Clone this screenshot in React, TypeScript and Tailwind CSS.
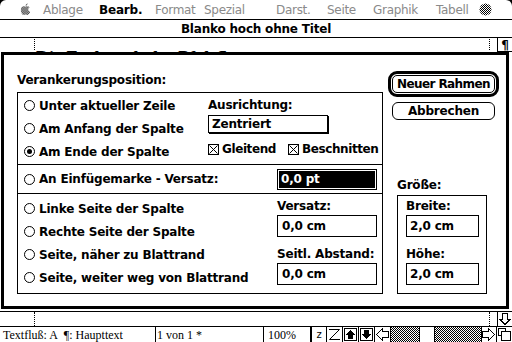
import React from "react";

const chicago = "font-['DejaVu_Sans',sans-serif] font-bold text-[12px] tracking-[-0.2px] leading-none";
const dim = "font-normal text-[#8a8a8a] tracking-[-0.3px]";

function Radio({ on }: { on?: boolean }) {
  return (
    <span className="w-[11px] h-[11px] rounded-full border border-black flex items-center justify-center shrink-0">
      {on && <span className="w-[5px] h-[5px] rounded-full bg-black" />}
    </span>
  );
}

function Check() {
  return (
    <svg width="11" height="11" viewBox="0 0 11 11" className="shrink-0">
      <rect x="0.5" y="0.5" width="10" height="10" fill="white" stroke="black" shapeRendering="crispEdges" />
      <path d="M1.5 1.5L9.5 9.5M9.5 1.5L1.5 9.5" stroke="black" strokeWidth="1" />
    </svg>
  );
}

function Opt({ label, on }: { label: string; on?: boolean }) {
  return (
    <div className="h-[23px] flex items-center gap-[4px] whitespace-nowrap">
      <Radio on={on} />
      <span>{label}</span>
    </div>
  );
}

function Checker({ id, w, h }: { id: string; w: number; h: number }) {
  return (
    <svg width={w} height={h} className="block">
      <defs>
        <pattern id={id} width="2" height="2" patternUnits="userSpaceOnUse">
          <rect x="0" y="0" width="1" height="1" fill="black" />
          <rect x="1" y="1" width="1" height="1" fill="black" />
        </pattern>
      </defs>
      <rect x="0" y="0" width={w} height={h} fill={`url(#${id})`} shapeRendering="crispEdges" />
    </svg>
  );
}

export default function App() {
  return (
    <div className="w-[512px] h-[342px] bg-black overflow-hidden flex flex-col text-black">
      {/* Menüleiste */}
      <div className={`h-[20px] shrink-0 bg-white rounded-t-[6px] border-b border-black flex items-center pl-[20px] whitespace-nowrap ${chicago}`}>
        <div className="w-[23px]">
          <svg width="11" height="13" viewBox="0 0 12 14">
            <defs>
              <pattern id="dA" width="2" height="2" patternUnits="userSpaceOnUse">
                <rect x="0" y="0" width="1" height="1" fill="black" />
                <rect x="1" y="1" width="1" height="1" fill="black" />
              </pattern>
            </defs>
            <path d="M8.5 0.5C8.2 2 7.2 3 6 3C6 1.8 7 0.8 8.5 0.5Z" fill="url(#dA)" />
            <path d="M6 4C4.5 3.2 1 3 1 7.5C1 10 2.5 13 4 13C5 13 5 12.5 6 12.5C7 12.5 7 13 8 13C9.5 13 11 10.5 11 9.5C9.5 9 9 8 9 7C9 6 9.5 5 10.5 4.5C9.5 3.5 7.5 3.2 6 4Z" fill="url(#dA)" />
          </svg>
        </div>
        <div className={`w-[56px] ${dim}`}>Ablage</div>
        <div className="w-[56px]">Bearb.</div>
        <div className={`w-[49px] ${dim}`}>Format</div>
        <div className={`w-[72px] ${dim}`}>Spezial</div>
        <div className={`w-[51px] ${dim}`}>Darst.</div>
        <div className={`w-[46px] ${dim}`}>Seite</div>
        <div className={`w-[63px] ${dim}`}>Graphik</div>
        <div className={`w-[43px] ${dim}`}>Tabell</div>
        <svg width="13" height="13" viewBox="0 0 13 13">
          <defs>
            <pattern id="dB" width="2" height="2" patternUnits="userSpaceOnUse">
              <rect x="0" y="0" width="1" height="1" fill="black" />
              <rect x="1" y="1" width="1" height="1" fill="black" />
            </pattern>
          </defs>
          <circle cx="6.5" cy="6.5" r="6" fill="url(#dB)" />
        </svg>
      </div>

      {/* Titelleiste */}
      <div className={`h-[18px] shrink-0 bg-white border-b border-black flex items-center justify-center ${chicago}`}>
        Blanko hoch ohne Titel
      </div>

      {/* Lineal / Text dahinter */}
      <div className="h-[14px] shrink-0 bg-white flex overflow-hidden">
        <div className="w-[34px] shrink-0" />
        <div className="h-[11px] mt-[1px] border-l border-dotted border-black" />
        <div className="w-[454px] shrink-0 overflow-hidden pl-[1px]">
          <div className="mt-[11px] font-['Liberation_Serif',serif] font-bold text-[18px] leading-[18px] whitespace-nowrap">
            Die Fachwerk der Pfalz¶
          </div>
        </div>
        <div className="h-[11px] mt-[1px] border-l border-dotted border-black" />
        <div className="w-[7px] shrink-0" />
        <div className="w-[15px] shrink-0 border-l border-b border-black flex items-center justify-center font-['DejaVu_Sans',sans-serif] font-bold text-[12px] leading-none">
          ¶
        </div>
      </div>

      {/* Dialog */}
      <div className="h-[257px] shrink-0 bg-white flex">
        <div className="w-[1px] shrink-0" />
        <div className={`w-[508px] h-full border-[3px] border-black flex ${chicago}`}>
          <div className="pl-[13px] pt-[17px] flex flex-col">
            <div className="h-[16px] flex items-center">Verankerungsposition:</div>
            <div className="mt-[4px] w-[366px] h-[202px] border border-black flex flex-col">
              {/* oberer Bereich */}
              <div className="h-[72px] border-b border-black flex">
                <div className="w-[190px] pl-[6px] pt-[1px]">
                  <Opt label="Unter aktueller Zeile" />
                  <Opt label="Am Anfang der Spalte" />
                  <Opt label="Am Ende der Spalte" on />
                </div>
                <div className="pt-[1px] flex flex-col">
                  <div className="h-[21px] flex items-center">Ausrichtung:</div>
                  <div className="w-[120px] h-[18px] border border-black shadow-[1px_1px_0_0_#000] flex items-center pl-[3px]">
                    Zentriert
                  </div>
                  <div className="mt-[5px] h-[22px] flex items-center gap-[3px] whitespace-nowrap tracking-[-0.4px]">
                    <Check />
                    <span className="w-[56px]">Gleitend</span>
                    <span className="w-[4px]" />
                    <Check />
                    <span>Beschnitten</span>
                  </div>
                </div>
              </div>
              {/* mittlerer Bereich */}
              <div className="h-[29px] border-b border-black flex items-center">
                <div className="w-[259px] pl-[6px] flex items-center gap-[4px] whitespace-nowrap">
                  <Radio />
                  <span>An Einfügemarke - Versatz:</span>
                </div>
                <div className="w-[100px] h-[21px] border border-black bg-white p-[1px]">
                  <div className="w-full h-full bg-black text-white flex items-center pl-[2px]">0,0 pt</div>
                </div>
              </div>
              {/* unterer Bereich */}
              <div className="flex-1 flex">
                <div className="w-[259px] pl-[6px] pt-[3px]">
                  <Opt label="Linke Seite der Spalte" />
                  <Opt label="Rechte Seite der Spalte" />
                  <Opt label="Seite, näher zu Blattrand" />
                  <Opt label="Seite, weiter weg von Blattrand" />
                </div>
                <div className="pt-[2px] flex flex-col">
                  <div className="h-[19px] flex items-center">Versatz:</div>
                  <div className="w-[100px] h-[22px] border border-black flex items-center pl-[4px]">0,0 cm</div>
                  <div className="mt-[7px] h-[19px] flex items-center">Seitl. Abstand:</div>
                  <div className="w-[100px] h-[22px] border border-black flex items-center pl-[4px]">0,0 cm</div>
                </div>
              </div>
            </div>
          </div>

          <div className="ml-[5px] pt-[16px] flex flex-col">
            <div className="w-[111px] h-[26px] border-[3px] border-black rounded-[9px] p-[1px]">
              <div className="w-full h-full border border-black rounded-[5px] flex items-center justify-center whitespace-nowrap tracking-[-0.6px]">
                Neuer Rahmen
              </div>
            </div>
            <div className="mt-[5px] ml-[4px] w-[103px] h-[18px] border border-black rounded-[6px] flex items-center justify-center">
              Abbrechen
            </div>
            <div className="mt-[57px] ml-[9px] h-[16px] flex items-center">Größe:</div>
            <div className="mt-[2px] ml-[9px] w-[90px] h-[99px] border border-black pl-[8px] flex flex-col">
              <div className="h-[19px] flex items-center">Breite:</div>
              <div className="w-[73px] h-[22px] border border-black flex items-center pl-[3px]">2,0 cm</div>
              <div className="mt-[7px] h-[19px] flex items-center">Höhe:</div>
              <div className="w-[73px] h-[22px] border border-black flex items-center pl-[3px]">2,0 cm</div>
            </div>
          </div>
        </div>
        <div className="flex-1" />
      </div>

      <div className="h-[2px] shrink-0 bg-white" />

      {/* untere Leiste */}
      <div className="h-[15px] shrink-0 bg-white border-t border-black flex">
        <div className="w-[34px] shrink-0" />
        <div className="h-full border-l border-dotted border-black" />
        <div className="w-[454px] shrink-0" />
        <div className="h-full border-l border-dotted border-black" />
        <div className="w-[7px] shrink-0" />
        <div className="w-[15px] shrink-0 border-l border-black flex items-center justify-center">
          <svg width="14" height="14" viewBox="0 0 14 14">
            <path d="M7 12.5L1.5 7H4.5V1.5H9.5V7H12.5Z" fill="white" stroke="black" shapeRendering="crispEdges" />
          </svg>
        </div>
      </div>

      {/* Statuszeile */}
      <div className="h-[16px] shrink-0 bg-white border-t border-black flex font-['Liberation_Serif',serif] text-[12px] leading-none">
        <div className="w-[156px] shrink-0 border-r border-black flex items-center pl-[3px] pt-[1px] whitespace-nowrap">
          Textfluß: A&nbsp;&nbsp;¶: Haupttext
        </div>
        <div className="w-[108px] shrink-0 border-r border-black flex items-center pl-[1px] pt-[1px] whitespace-nowrap">
          1 von 1 *
        </div>
        <div className="w-[48px] shrink-0 border-r-2 border-black flex items-center pl-[4px] pt-[1px]">100%</div>
        <div className="w-[15px] shrink-0 border-r border-black flex items-center justify-center font-['DejaVu_Sans',sans-serif] text-[10px]">
          z
        </div>
        <div className="w-[16px] shrink-0 border-r border-black flex items-center justify-center">
          <svg width="15" height="15" viewBox="0 0 15 15">
            <path d="M2 2.5H12.5L2.5 12.5H13" fill="none" stroke="black" />
          </svg>
        </div>
        <div className="w-[16px] shrink-0 border-r border-black flex items-center justify-center">
          <svg width="15" height="15" viewBox="0 0 15 15" shapeRendering="crispEdges">
            <rect x="1.5" y="1.5" width="12" height="12" fill="white" stroke="black" />
            <path d="M7.5 3L12 8H10V12H5V8H3Z" fill="black" />
          </svg>
        </div>
        <div className="w-[16px] shrink-0 border-r border-black flex items-center justify-center">
          <svg width="15" height="15" viewBox="0 0 15 15" shapeRendering="crispEdges">
            <rect x="1.5" y="1.5" width="12" height="12" fill="white" stroke="black" />
            <path d="M7.5 12L12 7H10V3H5V7H3Z" fill="black" />
          </svg>
        </div>
        <div className="w-[16px] shrink-0 border-r border-black flex items-center justify-center">
          <svg width="15" height="15" viewBox="0 0 15 15">
            <path d="M1.5 7.5L7.5 1.5V4.5H13.5V10.5H7.5V13.5Z" fill="white" stroke="black" shapeRendering="crispEdges" />
          </svg>
        </div>
        <div className="w-[90px] shrink-0 relative">
          <Checker id="track" w={90} h={15} />
          <div className="absolute left-[28px] top-0 w-[16px] h-full bg-white border-x border-black" />
        </div>
        <div className="w-[16px] shrink-0 border-x border-black flex items-center justify-center">
          <svg width="14" height="15" viewBox="0 0 14 15">
            <path d="M12.5 7.5L6.5 1.5V4.5H0.5V10.5H6.5V13.5Z" fill="white" stroke="black" shapeRendering="crispEdges" />
          </svg>
        </div>
        <div className="w-[15px] shrink-0 flex items-center justify-center">
          <svg width="15" height="15" viewBox="0 0 15 15" shapeRendering="crispEdges">
            <rect x="1.5" y="1.5" width="7" height="7" fill="white" stroke="black" />
            <rect x="4.5" y="4.5" width="9" height="9" fill="white" stroke="black" />
          </svg>
        </div>
      </div>
    </div>
  );
}
